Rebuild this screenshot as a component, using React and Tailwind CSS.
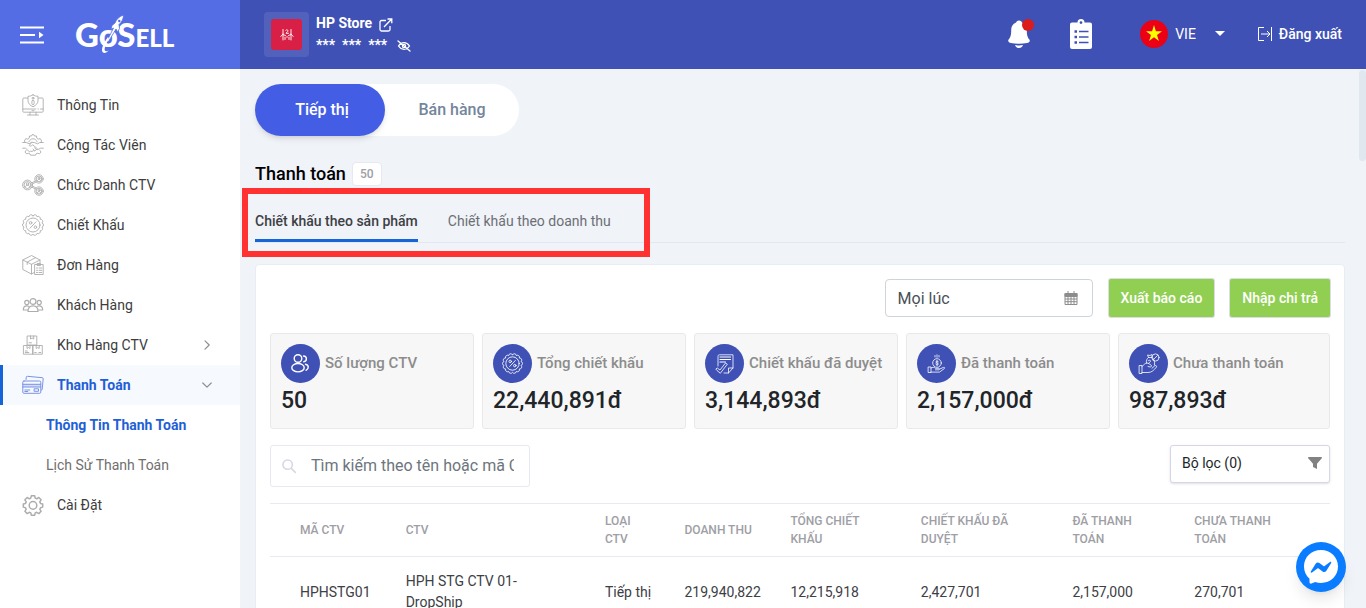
import React from "react";

const line = {
  fill: "none",
  stroke: "currentColor",
  strokeLinecap: "round",
  strokeLinejoin: "round",
};

function InfoIcon() {
  return (
    <svg viewBox="0 0 22 22" className="size-[22px]" {...line} strokeWidth="0.9" aria-hidden="true">
      <path d="M5.5 4H1.8a1 1 0 0 0-1 1v12.2a1 1 0 0 0 1 1h18.4a1 1 0 0 0 1-1V5a1 1 0 0 0-1-1h-3.7M.8 15h13M16 15h.5M18.500 15h2.7M8 18.200v2.600M14 18.200v2.600M5.500 21h11M10 16.700h2" />
      <path d="M11 .8c1.500 1.100 3.300 1.500 5 1.500v4.200c0 2.900-2 4.900-5 6.300-3-1.400-5-3.400-5-6.300V2.300c1.700 0 3.500-.4 5-1.500z" />
      <circle cx="11" cy="4.200" r="0.900" />
      <rect x="9.900" y="6.400" width="2.200" height="4.200" rx="1" />
    </svg>
  );
}

function PartnerIcon() {
  return (
    <svg viewBox="0 0 22 22" className="size-[22px]" {...line} strokeWidth="0.9" aria-hidden="true">
      <path d="M3.500 8.500 2.300 7l1.500-2.400 2 .6 1.400-1L7.500 2h2l.6-1.300h1.800l.6 1.300h2l.3 2.200 1.400 1 2-.6L19.700 7l-1.200 1.500" />
      <path d="M6.800 7.800C8 5.500 9.400 4.800 11 4.800s3 .7 4.200 3" />
      <path d="M.7 8.500h3.500l3 1.200 2.600-1.500 2.600.4 3.200 1.200 2.200-1.300h3.500M.7 14.200h2.800l3.800 3.500 1.400-.6 1.300.5 1.400-1 1.500.4 1.200-1.500 1.700.2 2.700-1.500h2.800" />
      <path d="M9.600 8.600 7.200 11.400c.8 1 2 .8 3.600-.6l4.600 4M12.700 13.800l1.400 1.500M11 15l1.300 1.400" />
      <path d="m4 16.500-1 1.500 1.500 1.800 2.200-.5 1.300.6.500 1.300h5l.5-1.300 1.300-.6 2.200.5L19 18l-1-1.500" />
    </svg>
  );
}

function RolesIcon() {
  return (
    <svg viewBox="0 0 22 22" className="size-[22px]" {...line} strokeWidth="0.9" aria-hidden="true">
      <circle cx="5.500" cy="11" r="4.900" />
      <circle cx="5.500" cy="11" r="3.500" />
      <circle cx="5.500" cy="10" r="1.200" />
      <path d="M3.300 13c.3-1.300 1.200-1.700 2.200-1.700s1.900.4 2.200 1.700" />
      <circle cx="17" cy="4.900" r="4.200" />
      <circle cx="17" cy="4.900" r="2.900" />
      <circle cx="17" cy="4.200" r="1" />
      <path d="M15.200 6.800c.3-1 1-1.300 1.800-1.300s1.500.3 1.800 1.300" />
      <circle cx="17" cy="17.100" r="4.200" />
      <circle cx="17" cy="17.100" r="2.900" />
      <circle cx="17" cy="16.400" r="1" />
      <path d="M15.200 19c.3-1 1-1.300 1.800-1.300s1.500.3 1.800 1.300M9.900 8.800l3.400-1.800M10.300 10l3.800-2M9.900 13.200l3.400 1.800M10.300 12l3.800 2" />
    </svg>
  );
}

// Outline of a round seal with evenly spaced scallops.
function sealPath(count, radius, arc) {
  let d = "";
  for (let i = 0; i <= count; i++) {
    const a = (i / count) * Math.PI * 2;
    const x = (11 + radius * Math.sin(a)).toFixed(2);
    const y = (11 - radius * Math.cos(a)).toFixed(2);
    d += i === 0 ? `M${x} ${y}` : `A${arc} ${arc} 0 0 1 ${x} ${y}`;
  }
  return d + "z";
}

const seal = sealPath(14, 9.2, 2.15);

function DiscountIcon({ className = "size-[22px]" }) {
  return (
    <svg viewBox="0 0 22 22" className={className} {...line} strokeWidth="0.9" aria-hidden="true">
      <path d={seal} />
      <circle cx="11" cy="11" r="7" />
      <circle cx="8.600" cy="8.800" r="1.300" />
      <circle cx="13.400" cy="13.200" r="1.300" />
      <path d="M14 7.800 8 14.200" />
    </svg>
  );
}

function OrderIcon() {
  return (
    <svg viewBox="0 0 22 22" className="size-[22px]" {...line} strokeWidth="0.9" aria-hidden="true">
      <path d="M12.500 18.300 9.500 20 .8 15.500V6L9.500 1.500 18 6v3M.8 6l8.700 4.300L18 6M9.500 10.300V20M13.500 3.700 5.200 8v2.500" />
      <path d="M13 10.500h8.200v10H13zM15.500 9.500h3v2h-3zM14.500 14h1M17 14h2.700M14.500 16.300h1M17 16.300h2.700M14.500 18.500h1M17 18.500h2.700" />
    </svg>
  );
}

function CustomersIcon() {
  return (
    <svg viewBox="0 0 22 22" className="size-[22px]" {...line} strokeWidth="1.2" aria-hidden="true">
      <circle cx="11" cy="7.500" r="2.900" />
      <path d="M6 17.500c0-4 1.600-5.700 5-5.700s5 1.700 5 5.700z" />
      <circle cx="4.800" cy="8.500" r="2.100" />
      <circle cx="17.200" cy="8.500" r="2.100" />
      <path d="M5.500 16H1.300c0-3 1.200-4.200 3.500-4.200.9 0 1.600.2 2.100.6M16.500 16h4.200c0-3-1.200-4.200-3.500-4.200-.9 0-1.600.2-2.100.6" />
    </svg>
  );
}

function WarehouseIcon() {
  return (
    <svg viewBox="0 0 22 22" className="size-[22px]" {...line} strokeWidth="0.9" aria-hidden="true">
      <path d="M5.500 2h9.300v9H5.500zM8.500 2v3l1.600-1 1.600 1V2M7 8.800h2.500M1.800 11.500h9.200v8.700H1.800zM11 11.500h9.300v8.700H11zM5 11.500v3l1.500-1 1.500 1v-3M14.200 11.500v3l1.500-1 1.500 1v-3M3.300 17h2M3.300 18.500h3.500M16.800 18.500h2M12.700 18.500h1.500" />
    </svg>
  );
}

function CardsIcon() {
  return (
    <svg viewBox="0 0 22 22" className="size-[22px]" {...line} strokeWidth="1" aria-hidden="true">
      <path d="M4 5.500 4.300 3.200a1 1 0 0 1 1.100-.9l14.900 1.400a1 1 0 0 1 .9 1.100l-1 10.500a1 1 0 0 1-1 .9" />
      <path fill="#d3dcf8" d="M.8 10h18v3H.8z" stroke="none" />
      <rect x="0.800" y="7" width="18" height="12.300" rx="1.200" />
      <path d="M.8 10.300h18M.8 13h18M2.800 16h5M2.800 17.500h3" />
      <rect x="12.500" y="14.800" width="4" height="2.500" />
    </svg>
  );
}

function GearIcon() {
  return (
    <svg viewBox="0 0 22 22" className="size-[22px]" {...line} strokeWidth="1.5" aria-hidden="true">
      <path d="M9.300 1.800h3.400l.5 2.300 1.500.7 2.100-1.300 2.300 2.300-1.300 2.100.7 1.500 2.200.5v3.200l-2.200.6-.7 1.500 1.300 2.100-2.300 2.300-2.100-1.300-1.500.6-.5 2.300H9.300l-.5-2.300-1.500-.6-2.100 1.300-2.300-2.300 1.300-2.100-.7-1.500-2.200-.6V9.900l2.200-.5.7-1.500-1.300-2.100 2.300-2.300 2.100 1.300 1.500-.7z" />
      <circle cx="11" cy="11.400" r="3.800" />
    </svg>
  );
}

function Chevron({ down }) {
  return (
    <svg viewBox="0 0 10 10" className="size-[10px] text-[#8f8f8f]" {...line} strokeWidth="1.2" aria-hidden="true">
      <path d={down ? "M.8 3 5 7.200 9.200 3" : "M3 .8 7.200 5 3 9.200"} />
    </svg>
  );
}

const menu = [
  { label: "Thông Tin", icon: InfoIcon },
  { label: "Cộng Tác Viên", icon: PartnerIcon },
  { label: "Chức Danh CTV", icon: RolesIcon },
  { label: "Chiết Khấu", icon: DiscountIcon },
  { label: "Đơn Hàng", icon: OrderIcon },
  { label: "Khách Hàng", icon: CustomersIcon },
  { label: "Kho Hàng CTV", icon: WarehouseIcon, expandable: true },
  {
    label: "Thanh Toán",
    icon: CardsIcon,
    expandable: true,
    active: true,
    children: [
      { label: "Thông Tin Thanh Toán", active: true },
      { label: "Lịch Sử Thanh Toán" },
    ],
  },
  { label: "Cài Đặt", icon: GearIcon },
];

function Logo() {
  return (
    <a href="#" aria-label="GoSell" className="relative flex items-baseline font-[Lato,sans-serif] leading-none font-black text-white">
      <span className="text-[33px]">GoS</span>
      <span className="text-2xl leading-none">ELL</span>
      <svg viewBox="0 0 26 42" className="absolute -top-[4px] left-[24px] h-[42px] w-[26px]" aria-hidden="true">
        <path d="M24.500 1c-4 1.500-7 4-8.500 8l-3 2.500-1 4 2.500-1.500L8 27l1.500.5 7.500-12.500 1.500 3 2-3.500-.5-4c3-2.500 4.500-6 4.500-9.500z" fill="#fff" stroke="#546de5" strokeWidth="0.800" />
        <circle cx="20.300" cy="7" r="1.200" fill="#546de5" />
        <path d="M9 23C4 30 1.500 36 4 38.500c1.500 1 4 0 6-2.200-1.500 1-3.200 1.200-4 .4C4.800 35 7 29.500 10 25z" fill="#fff" />
      </svg>
    </a>
  );
}

function Header() {
  return (
    <header className="flex h-[69px] shrink-0 bg-[#3f51b5] text-white">
      <div className="flex w-60 shrink-0 items-center gap-[31px] bg-[#546de5] pl-5">
        <button type="button" aria-label="Menu">
          <svg viewBox="0 0 24 18" className="h-[18px] w-6" aria-hidden="true">
            <path d="M0 1.500h24M0 9h15M0 16.500h24" stroke="#fff" strokeWidth="2" />
            <path d="M19 5.700 23.500 9 19 12.300z" fill="#fff" />
          </svg>
        </button>
        <Logo />
      </div>
      <div className="flex flex-1 items-center justify-between pr-6 pl-6">
        <div className="flex items-center gap-[7px]">
          <span className="flex size-[45px] items-center justify-center rounded-sm bg-white/10">
            <span className="flex size-[31px] items-center justify-center rounded-[3px] bg-[#d81f45]">
              <svg viewBox="0 0 14 14" className="size-[14px]" {...line} stroke="#fff" strokeWidth="0.900" aria-hidden="true">
                <path d="M3 1.500v10.500M11 1.500v10.500M.8 8.500 3 6M13.200 8.500 11 6M5.800 2.200c1-.9 2.600-.2 2 1.100L6 5.300h2.500M5 11.500V9.200M9 11.500V9.200M3 6.500l2.500 1M11 6.500l-2.500 1M7 8.500v.8" />
              </svg>
            </span>
          </span>
          <span className="flex flex-col gap-px">
            <a href="#" className="flex items-center gap-[7px] text-sm leading-[21px] font-bold">
              HP Store
              <svg viewBox="0 0 14 14" className="mt-[3px] size-[14px]" fill="none" stroke="#fff" strokeWidth="1.300" aria-hidden="true">
                <path d="M7 2.500H2.500a1.500 1.500 0 0 0-1.500 1.500v7.500A1.500 1.500 0 0 0 2.500 13h7a1.500 1.500 0 0 0 1.500-1.500V8M8.500 1h4.300v4.300M12.500 1.300 5 9" />
              </svg>
            </a>
            <span className="flex items-center text-sm leading-[21px] font-bold">
              <span className="flex gap-[7px]"><span>***</span><span>***</span><span>***</span></span>
              <button type="button" aria-label="Hiện số dư" className="ml-[10px]">
                <svg viewBox="0 0 14 12" className="h-3 w-[14px]" {...line} stroke="#fff" strokeWidth="1.300" aria-hidden="true">
                  <path d="M1.500 6c1.300-2 3.200-3.300 5.500-3.300S11.200 4 12.500 6c-1.300 2-3.200 3.300-5.500 3.300S2.800 8 1.500 6zM1 1l12 10" />
                  <circle cx="7" cy="6" r="1.600" />
                </svg>
              </button>
            </span>
          </span>
        </div>
        <div className="flex items-center pb-0.5 text-sm">
          <button type="button" aria-label="Thông báo" className="relative">
            <svg viewBox="0 0 22 28" className="h-7 w-[22px]" fill="#fff" aria-hidden="true">
              <path d="M11 .5c1.500 0 2.600.8 3 2 3.200 1.200 4.800 4 4.800 7.500 0 5 .6 7.200 2.600 9.500 1.200 2-.5 3.200-2.400 3.500-5 1-11 1-16 0C1 22.700-.6 21.500.6 19.500 2.600 17.200 3.200 15 3.200 10c0-3.500 1.600-6.300 4.800-7.500.4-1.200 1.500-2 3-2zM7 25c2.500.5 5.500.5 8 0-.6 1.800-2 3-4 3s-3.400-1.200-4-3z" />
            </svg>
            <span className="absolute -top-px -right-1 size-3 rounded-full bg-[#dc1b1b]" />
          </button>
          <button type="button" aria-label="Nhiệm vụ" className="ml-10">
            <svg viewBox="0 0 22 30" className="h-[30px] w-[22px]" aria-hidden="true">
              <path fill="#fff" fillRule="evenodd" d="M2 3.500h5.500a3.500 3.500 0 0 1 7 0H20a2 2 0 0 1 2 2V28a2 2 0 0 1-2 2H2a2 2 0 0 1-2-2V5.500a2 2 0 0 1 2-2zM11 2.200a1.400 1.400 0 1 0 0 2.800 1.400 1.400 0 0 0 0-2.800z" />
              <path d="M9 12.500h9.500M9 18h9.500M9 23.500h9.500" stroke="#3f51b5" strokeWidth="1.400" />
              <path d="M4.500 12.500h2.500M4.500 18h2.500M4.500 23.500h2.500" stroke="#3f51b5" strokeWidth="2.400" />
            </svg>
          </button>
          <button type="button" aria-haspopup="listbox" className="ml-12 flex items-center">
            <svg viewBox="0 0 28 28" className="size-7" aria-hidden="true">
              <circle cx="14" cy="14" r="14" fill="#ec0015" />
              <path fill="#ff0" d="m14 5 1.900 6.200H22l-5 3.700 1.900 6.100L14 17.200 9.100 21l1.900-6.100-5-3.700h6.100z" />
            </svg>
            <span className="ml-[7px]">VIE</span>
            <span className="ml-[19px] h-0 w-0 border-x-[5px] border-t-[5px] border-x-transparent border-t-white" />
          </button>
          <a href="#" className="ml-[33px] flex items-center gap-[7px] font-medium">
            <svg viewBox="0 0 14 14" className="size-[14px]" fill="none" stroke="#fff" strokeWidth="1" aria-hidden="true">
              <path d="M6 .5H.5v13H6M13.500 0v14" />
              <path d="M3 7h9M9 4l3 3-3 3" />
            </svg>
            Đăng xuất
          </a>
        </div>
      </div>
    </header>
  );
}

function Sidebar() {
  return (
    <nav className="w-60 shrink-0 bg-white pt-4 text-sm">
      <ul>
        {menu.map((m) => (
          <li key={m.label}>
            <a
              href="#"
              className={
                "flex h-10 items-center border-l-3 pr-7 pl-[19px] " +
                (m.active ? "border-[#1665d8] bg-[#f6f9fe] font-bold text-[#1f5fd6]" : "border-transparent text-[#3d3d3d]")
              }
            >
              <span className={"mr-[13px] " + (m.active ? "text-[#7b93e6]" : "text-[#adadad]")}>
                <m.icon />
              </span>
              <span className="flex-1">{m.label}</span>
              {m.expandable && <Chevron down={m.active} />}
            </a>
            {m.children && (
              <ul>
                {m.children.map((c) => (
                  <li key={c.label}>
                    <a
                      href="#"
                      className={"flex h-10 items-center pl-[46px] " + (c.active ? "font-bold text-[#1f5fd6]" : "text-[#6f6f6f]")}
                    >
                      {c.label}
                    </a>
                  </li>
                ))}
              </ul>
            )}
          </li>
        ))}
      </ul>
    </nav>
  );
}

function UsersIcon() {
  return (
    <svg viewBox="0 0 20 20" className="size-5" {...line} strokeWidth="1.400" aria-hidden="true">
      <circle cx="7" cy="4.500" r="3.800" />
      <ellipse cx="7" cy="13.700" rx="6.200" ry="4.200" />
      <path d="M12.500 2c3.800.3 3.800 5.300.3 5.800M14.500 10.300c3.600.8 3.600 4.500.5 6" />
    </svg>
  );
}

function ApprovedIcon() {
  return (
    <svg viewBox="0 0 20 20" className="size-5" {...line} strokeWidth="0.800" aria-hidden="true">
      <path d="M3 12V2.500C3 1.300 3.500.8 4.500.8H18V14l-4.500 5H9M18 14h-4.500v5M5 19l-3-2.500L.8 15l1.500-1L5 16l5.500-7 1.500 1z" />
      <path d="M5 3h10.500M5 5.500h10.500M5 8h5.500" strokeWidth="1.200" />
    </svg>
  );
}

function PaidIcon() {
  return (
    <svg viewBox="0 0 20 20" className="size-5" {...line} strokeWidth="0.800" aria-hidden="true">
      <circle cx="10" cy="9" r="4.300" />
      <path d="M11.400 7.700c-.6-.8-2.600-.8-2.600.3s2.600.8 2.600 2-2 1.200-2.700.2M10 6.500v5M8 3V1.500M10 3.300V.8M12 3V1.500M1.500 13H4v5.500H1.500zM4 14c1.500-1 3-1 4.500.3h3c1 0 1 1.500 0 1.500H8.500M12.300 15.200l4.200-1.800c1.300-.2 1.500.6.8 1.200l-4.800 3.500H4" />
    </svg>
  );
}

function UnpaidIcon() {
  return (
    <svg viewBox="0 0 22 22" className="size-[22px]" {...line} strokeWidth="0.800" aria-hidden="true">
      <path d="M1.500 12.500H4v8H1.500zM4 13.500c2-1.500 3-3.500 5-3.500s2.500 1.500 4 2c1 .6.500 2-.7 2L10 13.500M4 19.500h6c4 0 6-2.500 8.500-5.500.5-1.200-.8-2-1.700-1.200L14 15.200M8.500 10C8 7.500 9 5.500 10.500 4.500L9.500 2l2.500.5L14 1.500v3c2 1.500 3 4 2.500 7.500M10.500 4.500H14" />
      <circle cx="17.500" cy="4.500" r="3.600" />
      <path d="m15.500 6.500 4-4M10.500 7.500c1-.8 2.500 0 2 1s-1.800 1-2 2" />
    </svg>
  );
}

const stats = [
  { label: "Số lượng CTV", value: "50", icon: <UsersIcon /> },
  { label: "Tổng chiết khấu", value: "22,440,891đ", icon: <DiscountIcon className="size-[21px]" /> },
  { label: "Chiết khấu đã duyệt", value: "3,144,893đ", icon: <ApprovedIcon /> },
  { label: "Đã thanh toán", value: "2,157,000đ", icon: <PaidIcon /> },
  { label: "Chưa thanh toán", value: "987,893đ", icon: <UnpaidIcon /> },
];

const columns = [
  { label: "MÃ CTV", width: "w-[12.8%]" },
  { label: "CTV", width: "w-[18.8%]" },
  { label: "LOẠI CTV", width: "w-[7.5%]" },
  { label: "DOANH THU", width: "w-[10%]" },
  { label: "TỔNG CHIẾT KHẤU", width: "w-[12.3%]" },
  { label: "CHIẾT KHẤU ĐÃ DUYỆT", width: "w-[14.3%]" },
  { label: "ĐÃ THANH TOÁN", width: "w-[11.5%]" },
  { label: "CHƯA THANH TOÁN", width: "w-[12.8%]" },
];

const rows = [
  ["HPHSTG01", "HPH STG CTV 01-DropShip", "Tiếp thị", "219,940,822", "12,215,918", "2,427,701", "2,157,000", "270,701"],
];

export default function App() {
  return (
    <div className="flex h-screen flex-col overflow-hidden font-[Roboto,'Liberation_Sans',sans-serif] text-[#212529]">
      <Header />
      <div className="flex min-h-0 flex-1">
        <Sidebar />
        <main className="min-w-0 flex-1 overflow-hidden bg-[#f0f3f8] pt-[15px] pr-[14px] pl-[15px]">
          <div className="inline-flex h-[52px] rounded-full bg-white align-top font-medium">
            <button type="button" className="w-[130px] rounded-full bg-[#435de4] pl-1 text-white shadow-md">Tiếp thị</button>
            <button type="button" className="w-[134px] rounded-full text-[#74869b]">Bán hàng</button>
          </div>

          <div className="mt-[26px] flex items-center gap-[6px]">
            <h1 className="text-lg leading-6 font-medium text-black">Thanh toán</h1>
            <span className="rounded-sm border border-[#e6e9ef] bg-white px-[7px] text-xs leading-[22px] font-medium text-[#9e9ea5]">50</span>
          </div>

          <div className="relative mt-6">
            <div className="flex gap-[30px] border-b border-[#e3e7f0] text-sm leading-[23px]">
              <button type="button" className="border-b-3 border-[#1665d8] pb-[6px] font-medium text-[#3d4045]">Chiết khấu theo sản phẩm</button>
              <button type="button" className="border-b-3 border-transparent pb-[6px] text-[#6c6f75]">Chiết khấu theo doanh thu</button>
            </div>
            <div className="pointer-events-none absolute -top-[22px] -left-[13px] h-[69px] w-[408px] border-6 border-[#ff3131]" />
          </div>

          <section className="mt-[21px] rounded-sm border border-[#e8ecf3] bg-white px-[14px] pt-[14px]">
            <div className="flex justify-end gap-4 text-sm">
              <label className="flex h-[38px] w-[208px] items-center rounded-[4px] border border-[#ced4da] px-3">
                <input type="text" aria-label="Khoảng thời gian" defaultValue="Mọi lúc" className="min-w-0 flex-1 pt-0.5 text-base text-[#495057] outline-none" />
                <svg viewBox="0 0 14 14" className="mr-[2px] size-[14px]" fill="none" stroke="#8c8c8c" aria-hidden="true">
                  <path d="M1 2.500h12v3H1z" fill="#8c8c8c" />
                  <path d="M1 2.500h12v11H1zM1 8h12M1 10.700h12M4 5v8.500M7 5v8.500M10 5v8.500M4 0v3M10 0v3" />
                </svg>
              </label>
              <button type="button" className="h-[38px] rounded-[2px] bg-[#90cf52] px-3 font-medium text-white ring-1 ring-[#dcdce4]">Xuất báo cáo</button>
              <button type="button" className="h-[38px] rounded-[2px] bg-[#90cf52] px-3 font-medium text-white ring-1 ring-[#dcdce4]">Nhập chi trả</button>
            </div>

            <div className="mt-4 grid grid-cols-5">
              {stats.map((s) => (
                <div key={s.label} className="pr-2 last:pr-0">
                  <div className="h-24 rounded-[3px] border border-[#e9e9e9] bg-[#f7f7f7] px-[10px] pt-[10px]">
                    <div className="flex items-center gap-[5px]">
                      <span className="flex size-[39px] shrink-0 items-center justify-center rounded-full bg-[#3f51b5] text-white">{s.icon}</span>
                      <span className="pb-0.5 text-[15px] leading-5 font-medium whitespace-nowrap text-[#8c8c8c]">{s.label}</span>
                    </div>
                    <div className="text-[23px] leading-9 font-medium">{s.value}</div>
                  </div>
                </div>
              ))}
            </div>

            <div className="mt-4 flex items-start justify-between">
              <label className="flex h-[42px] w-[260px] items-center rounded-[3px] border border-[#e7e8f1] pr-[15px] pl-[11px]">
                <svg viewBox="0 0 16 16" className="mr-[14px] size-[15px] shrink-0" {...line} stroke="#d6d9e4" strokeWidth="1.700" aria-hidden="true">
                  <circle cx="6" cy="6" r="5" />
                  <path d="m10 10 4.200 4.200" />
                </svg>
                <input type="text" aria-label="Tìm kiếm" placeholder="Tìm kiếm theo tên hoặc mã CTV" className="min-w-0 flex-1 text-base outline-none placeholder:text-[#6c757d]" />
              </label>
              <button type="button" className="flex h-[38px] w-40 items-center justify-between rounded-[3px] border border-[#d5d7e8] bg-white pr-[7px] pb-0.5 pl-[11px] text-sm shadow-sm">
                Bộ lọc (0)
                <svg viewBox="0 0 14 12" className="h-3 w-[14px]" aria-hidden="true">
                  <path d="M.8 0h12.400c.8 0 1 .8.600 1.300L9 6.700V12L5 10V6.700L.2 1.300C-.2.8 0 0 .8 0z" fill="#828282" />
                </svg>
              </button>
            </div>

            <table className="mt-4 w-full table-fixed border-t border-[#e9e9f1] text-left">
              <thead>
                <tr className="border-b border-[#e9e9f1]">
                  {columns.map((c) => (
                    <th key={c.label} className={"py-2 pr-8 text-xs leading-[18px] font-medium text-[#9e9ea5] first:pr-0 first:pl-[30px] " + c.width}>{c.label}</th>
                  ))}
                </tr>
              </thead>
              <tbody>
                {rows.map((r) => (
                  <tr key={r[0]} className="border-b border-[#e9e9f1]">
                    {r.map((v, i) => (
                      <td key={i} className="py-[14px] pr-8 text-sm leading-[21px] text-[#3d4045] first:pr-0 first:pl-[30px]">{v}</td>
                    ))}
                  </tr>
                ))}
              </tbody>
            </table>
          </section>
        </main>
        <div className="w-[7px] shrink-0 bg-[#f0f3f8] pt-px">
          <div className="h-[91px] rounded-full bg-[#e1e7ef]" />
        </div>
      </div>

      <button type="button" aria-label="Messenger" className="fixed right-5 bottom-4 size-[50px] rounded-full bg-[#0a7cff] shadow-lg">
        <svg viewBox="0 0 50 50" className="size-[50px]" aria-hidden="true">
          <path fill="#fff" d="M25 8C15.300 8 8 15 8 24.500c0 5 2 9.200 5.500 12.200v3.600c0 1.200 1 1.700 2 1.300l3.700-1.600c1.800.6 3.700.9 5.800.9 9.700 0 17-7 17-16.400S34.700 8 25 8z" />
          <path fill="#0a7cff" d="m14.800 29.500 5-8c.8-1.200 2.400-1.500 3.600-.6l4 3c.4.300.8.300 1.200 0l5.400-4c.7-.6 1.700.3 1.200 1l-5 8c-.8 1.200-2.400 1.500-3.600.6l-4-3c-.4-.3-.8-.3-1.200 0l-5.400 4c-.7.600-1.700-.300-1.200-1z" />
        </svg>
      </button>
    </div>
  );
}
